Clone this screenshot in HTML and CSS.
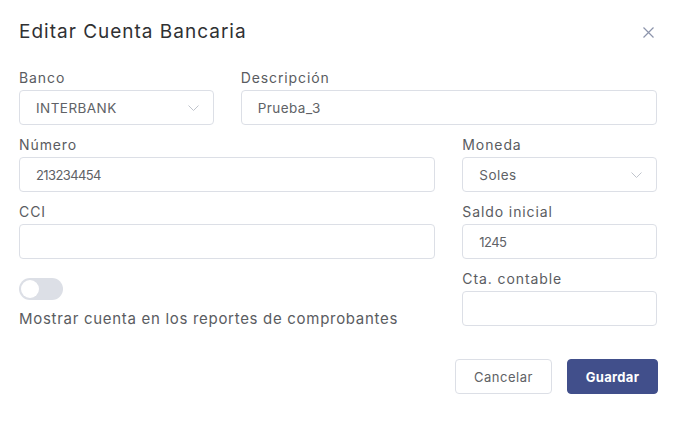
FILE: index.html
```html
<!DOCTYPE html>
<html lang="es">
<head>
<meta charset="utf-8">
<title>Editar Cuenta Bancaria</title>
<link rel="stylesheet" href="styles.css">
</head>
<body>
<div class="dialog">
  <div class="dialog-header">
    <span class="dialog-title">Editar Cuenta Bancaria</span>
    <button class="close-btn" aria-label="Cerrar">
      <svg width="11" height="11" viewBox="0 0 11 11"><path d="M0.5 0.5 L10.5 10.5 M10.5 0.5 L0.5 10.5" stroke="#8c94ab" stroke-width="1.2" fill="none"/></svg>
    </button>
  </div>
  <form class="form">
    <div class="item span1">
      <label class="label">Banco</label>
      <div class="input select"><span class="value">INTERBANK</span>
        <svg class="chev" width="11" height="6" viewBox="0 0 11 6"><path d="M0.5 0.5 L5.5 5.5 L10.5 0.5" stroke="#c0c4cc" stroke-width="1" fill="none"/></svg>
      </div>
    </div>
    <div class="item span2">
      <label class="label">Descripción</label>
      <div class="input"><span class="value">Prueba_3</span></div>
    </div>

    <div class="item span2">
      <label class="label">Número</label>
      <div class="input"><span class="value num">213234454</span></div>
    </div>
    <div class="item span1">
      <label class="label">Moneda</label>
      <div class="input select"><span class="value">Soles</span>
        <svg class="chev" width="11" height="6" viewBox="0 0 11 6"><path d="M0.5 0.5 L5.5 5.5 L10.5 0.5" stroke="#c0c4cc" stroke-width="1" fill="none"/></svg>
      </div>
    </div>

    <div class="item span2">
      <label class="label">CCI</label>
      <div class="input"></div>
    </div>
    <div class="item span1">
      <label class="label">Saldo inicial</label>
      <div class="input"><span class="value num">1245</span></div>
    </div>

    <div class="item span2 switch-item">
      <span class="switch"><span class="knob"></span></span>
      <span class="switch-text">Mostrar cuenta en los reportes de comprobantes</span>
    </div>
    <div class="item span1">
      <label class="label">Cta. contable</label>
      <div class="input"></div>
    </div>
  </form>
  <div class="footer">
    <button class="btn btn-default">Cancelar</button>
    <button class="btn btn-primary">Guardar</button>
  </div>
</div>
</body>
</html>
```
FILE: styles.css
```css
* { box-sizing: border-box; }
html, body { margin: 0; padding: 0; background: #ffffff; }
body { font-family: "Inter", "Noto Sans", sans-serif; color: #606266; }

.dialog { width: 678px; padding: 20px 20px 0 19px; }

.dialog-header { display: flex; justify-content: space-between; align-items: center; height: 24px; padding-right: 4px; }
.dialog-title { font-size: 19px; line-height: 24px; color: #303133; letter-spacing: 1px; }
.close-btn { border: 0; background: none; padding: 0; width: 11px; height: 11px; display: flex; cursor: pointer; }

.form { display: grid; grid-template-columns: repeat(3, 1fr); column-gap: 27px; margin-top: 24px; width: 638px; }
.item { display: flex; flex-direction: column; margin-bottom: 10px; }
.span1 { grid-column: span 1; }
.span2 { grid-column: span 2; }

.label { font-size: 14px; line-height: 20px; height: 20px; margin-bottom: 2px; color: #5a5c61; letter-spacing: 0.9px; }

.input { height: 35px; border: 1px solid #dcdfe6; border-radius: 4px; display: flex; align-items: center; padding: 0 14px 0 16px; }
.value { font-size: 13.5px; color: #606266; letter-spacing: 0.45px; flex: 1; }
.value.num { font-size: 13px; letter-spacing: -0.6px; }
.chev { flex: none; }

.switch-item { padding-top: 9px; }
.switch { width: 44px; height: 22px; border-radius: 11px; background: #dcdfe6; position: relative; display: block; }
.knob { position: absolute; top: 2px; left: 2px; width: 18px; height: 18px; border-radius: 50%; background: #ffffff; }
.switch-text { margin-top: 8px; font-size: 15px; line-height: 22px; color: #5a5c61; letter-spacing: 0.7px; }

.footer { display: flex; justify-content: flex-end; gap: 15px; margin-top: 19px; }
.btn { height: 35px; border-radius: 4px; font-family: "Inter", "Noto Sans", sans-serif; font-size: 13px; cursor: pointer; }
.btn-default { width: 97px; background: #ffffff; border: 1px solid #dcdfe6; color: #606266; letter-spacing: 0.5px; }
.btn-primary { width: 91px; background: #414f8b; border: 1px solid #414f8b; color: #ffffff; font-weight: 700; letter-spacing: 0.3px; }
```
